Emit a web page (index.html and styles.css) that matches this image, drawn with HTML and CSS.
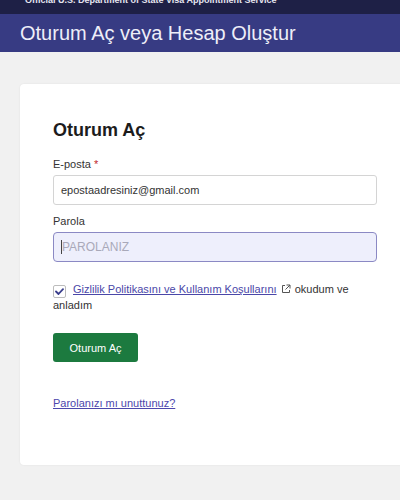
FILE: index.html
```html
<!DOCTYPE html>
<html lang="tr">
<head>
<meta charset="utf-8">
<title>Oturum Aç</title>
<link rel="stylesheet" href="styles.css">
</head>
<body>
<div class="topbar"><span class="topbar-text">Official U.S. Department of State Visa Appointment Service</span></div>
<div class="band"><h1 class="band-title">Oturum Aç veya Hesap Oluştur</h1></div>
<main class="page">
  <section class="card">
    <h2 class="card-title">Oturum Aç</h2>
    <div class="field">
      <label class="label">E-posta <span class="req">*</span></label>
      <div class="input">epostaadresiniz@gmail.com</div>
    </div>
    <div class="field">
      <label class="label">Parola</label>
      <div class="input input-focus"><span class="caret"></span><span class="placeholder">PAROLANIZ</span></div>
    </div>
    <div class="agree">
      <span class="checkbox"><svg class="check" width="9" height="7" viewBox="0 0 9 7"><path d="M1 3.5 L3.5 6 L8 1.2" fill="none" stroke="#3a3e8c" stroke-width="1.8" stroke-linecap="round" stroke-linejoin="round"/></svg></span><a class="link" href="#">Gizlilik Politikasını ve Kullanım Koşullarını</a> <svg class="ext" width="10" height="10" viewBox="0 0 10 10"><path d="M4 1.5 H1.5 V8.5 H8.5 V6" fill="none" stroke="#555" stroke-width="1"/><path d="M5.5 1 H9 V4.5 M9 1 L4.5 5.5" fill="none" stroke="#555" stroke-width="1"/></svg> okudum ve anladım
    </div>
    <button class="btn">Oturum Aç</button>
    <a class="link forgot" href="#">Parolanızı mı unuttunuz?</a>
  </section>
</main>
</body>
</html>
```
FILE: styles.css
```css
html, body {
  margin: 0;
  padding: 0;
}
body {
  width: 400px;
  height: 500px;
  overflow: hidden;
  background: #f1f1f1;
  font-family: "Liberation Sans", Arial, sans-serif;
  color: #222;
}
.topbar {
  height: 14px;
  background: #1e2046;
  overflow: hidden;
  padding-left: 25px;
}
.topbar-text {
  display: block;
  margin-top: -6px;
  font-size: 9px;
  font-weight: bold;
  color: #e6e6f0;
  white-space: nowrap;
  line-height: 12px;
}
.band {
  height: 38px;
  background: #373b83;
  padding-left: 20px;
  display: flex;
  align-items: center;
}
.band-title {
  margin: 0;
  font-size: 20px;
  font-weight: normal;
  color: #eeeef8;
  white-space: nowrap;
}
.page {
  padding: 32px 0 0 20px;
}
.card {
  width: 400px;
  height: 381px;
  box-sizing: border-box;
  background: #fff;
  border-radius: 4px 0 0 4px;
  box-shadow: 0 0 2px rgba(0,0,0,0.08);
  padding: 34px 0 0 33px;
}
.card-title {
  margin: 0 0 15px 0;
  font-size: 18px;
  font-weight: bold;
  color: #1c1c1c;
  line-height: 24px;
}
.field {
  margin-bottom: 9px;
}
.label {
  display: block;
  font-size: 11px;
  color: #333;
  line-height: 14px;
  margin-bottom: 4px;
}
.req {
  color: #c0272d;
}
.input {
  width: 324px;
  height: 30px;
  box-sizing: border-box;
  border: 1px solid #d4d4d4;
  border-radius: 3px;
  padding: 0 7px;
  font-size: 11px;
  color: #333;
  display: flex;
  align-items: center;
}
.input-focus {
  background: #eeeffc;
  border: 1.5px solid #8b89c4;
  border-radius: 4px;
}
.caret {
  width: 1px;
  height: 14px;
  background: #444;
}
.placeholder {
  color: #a9a9b9;
  font-size: 12px;
}
.agree {
  margin-top: 20px;
  font-size: 11px;
  line-height: 15px;
  color: #333;
  width: 320px;
}
.checkbox {
  display: inline-block;
  box-sizing: border-box;
  width: 13px;
  height: 13px;
  border: 1px solid #bcbcbc;
  border-radius: 2px;
  vertical-align: -2px;
  margin-right: 7px;
  background: #fff;
  line-height: 0;
  text-align: center;
}
.check {
  display: inline-block;
  margin-top: 2px;
}
.link {
  color: #4a47a8;
  text-decoration: underline;
}
.ext {
  display: inline-block;
  vertical-align: -1px;
  margin: 0 1px;
}
.btn {
  display: block;
  margin-top: 20px;
  width: 85px;
  height: 29px;
  background: #1c7a3f;
  color: #fff;
  border: none;
  border-radius: 3px;
  font-family: "Liberation Sans", Arial, sans-serif;
  font-size: 11px;
  padding: 0;
}
.forgot {
  display: inline-block;
  margin-top: 35px;
  font-size: 11px;
  color: #4c47ad;
}
```
